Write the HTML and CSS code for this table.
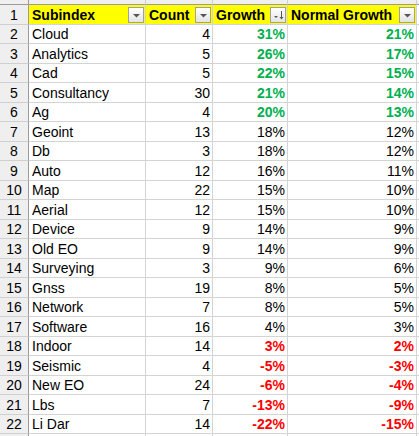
FILE: index.html
```html
<!DOCTYPE html>
<html>
<head>
<meta charset="utf-8">
<link rel="stylesheet" href="styles.css">
</head>
<body>
<div class="sheet">
  <div class="c ch corner"></div>
  <div class="c ch"><span class="lt">A</span></div>
  <div class="c ch"><span class="lt">B</span></div>
  <div class="c ch"><span class="lt">C</span></div>
  <div class="c ch"><span class="lt">D</span></div>
  <div class="c ch"><span class="lt">E</span></div>

  <div class="c rh">1</div>
  <div class="c hd"><span>Subindex</span><span class="fb"><svg width="13" height="14" viewBox="0 0 13 14"><polygon points="3,6 10,6 6.5,9.5" fill="#555"/></svg></span></div>
  <div class="c hd"><span>Count</span><span class="fb"><svg width="13" height="14" viewBox="0 0 13 14"><polygon points="3,6 10,6 6.5,9.5" fill="#555"/></svg></span></div>
  <div class="c hd"><span>Growth</span><span class="fb"><svg width="13" height="14" viewBox="0 0 13 14"><polygon points="2,8 6,8 4,10" fill="#555"/><line x1="9.5" y1="3" x2="9.5" y2="11" stroke="#555" stroke-width="1"/><polygon points="7.5,9 11.5,9 9.5,11.5" fill="#555"/></svg></span></div>
  <div class="c hd"><span>Normal Growth</span><span class="fb"><svg width="13" height="14" viewBox="0 0 13 14"><polygon points="3,6 10,6 6.5,9.5" fill="#555"/></svg></span></div>
  <div class="c"></div>

  <div class="c rh">2</div><div class="c">Cloud</div><div class="c n">4</div><div class="c n g">31%</div><div class="c n g">21%</div><div class="c"></div>
  <div class="c rh">3</div><div class="c">Analytics</div><div class="c n">5</div><div class="c n g">26%</div><div class="c n g">17%</div><div class="c"></div>
  <div class="c rh">4</div><div class="c">Cad</div><div class="c n">5</div><div class="c n g">22%</div><div class="c n g">15%</div><div class="c"></div>
  <div class="c rh">5</div><div class="c">Consultancy</div><div class="c n">30</div><div class="c n g">21%</div><div class="c n g">14%</div><div class="c"></div>
  <div class="c rh">6</div><div class="c">Ag</div><div class="c n">4</div><div class="c n g">20%</div><div class="c n g">13%</div><div class="c"></div>
  <div class="c rh">7</div><div class="c">Geoint</div><div class="c n">13</div><div class="c n">18%</div><div class="c n">12%</div><div class="c"></div>
  <div class="c rh">8</div><div class="c">Db</div><div class="c n">3</div><div class="c n">18%</div><div class="c n">12%</div><div class="c"></div>
  <div class="c rh">9</div><div class="c">Auto</div><div class="c n">12</div><div class="c n">16%</div><div class="c n">11%</div><div class="c"></div>
  <div class="c rh">10</div><div class="c">Map</div><div class="c n">22</div><div class="c n">15%</div><div class="c n">10%</div><div class="c"></div>
  <div class="c rh">11</div><div class="c">Aerial</div><div class="c n">12</div><div class="c n">15%</div><div class="c n">10%</div><div class="c"></div>
  <div class="c rh">12</div><div class="c">Device</div><div class="c n">9</div><div class="c n">14%</div><div class="c n">9%</div><div class="c"></div>
  <div class="c rh">13</div><div class="c">Old EO</div><div class="c n">9</div><div class="c n">14%</div><div class="c n">9%</div><div class="c"></div>
  <div class="c rh">14</div><div class="c">Surveying</div><div class="c n">3</div><div class="c n">9%</div><div class="c n">6%</div><div class="c"></div>
  <div class="c rh">15</div><div class="c">Gnss</div><div class="c n">19</div><div class="c n">8%</div><div class="c n">5%</div><div class="c"></div>
  <div class="c rh">16</div><div class="c">Network</div><div class="c n">7</div><div class="c n">8%</div><div class="c n">5%</div><div class="c"></div>
  <div class="c rh">17</div><div class="c">Software</div><div class="c n">16</div><div class="c n">4%</div><div class="c n">3%</div><div class="c"></div>
  <div class="c rh">18</div><div class="c">Indoor</div><div class="c n">14</div><div class="c n r">3%</div><div class="c n r">2%</div><div class="c"></div>
  <div class="c rh">19</div><div class="c">Seismic</div><div class="c n">4</div><div class="c n r">-5%</div><div class="c n r">-3%</div><div class="c"></div>
  <div class="c rh">20</div><div class="c">New EO</div><div class="c n">24</div><div class="c n r">-6%</div><div class="c n r">-4%</div><div class="c"></div>
  <div class="c rh">21</div><div class="c">Lbs</div><div class="c n">7</div><div class="c n r">-13%</div><div class="c n r">-9%</div><div class="c"></div>
  <div class="c rh">22</div><div class="c">Li Dar</div><div class="c n">14</div><div class="c n r">-22%</div><div class="c n r">-15%</div><div class="c"></div>
  <div class="c rh">23</div><div class="c"></div><div class="c"></div><div class="c"></div><div class="c"></div><div class="c"></div>
</div>
</body>
</html>
```

FILE: styles.css
```css
html, body {
  margin: 0;
  padding: 0;
  background: #ffffff;
}

.sheet {
  display: grid;
  grid-template-columns: 29px 117px 67px 75px 129px 1fr;
  grid-template-rows: 5px repeat(11, 20px 19px) 20px;
  font-family: "Liberation Sans", Arial, sans-serif;
  font-size: 14px;
  color: #000;
  overflow: hidden;
  height: 436px;
}

.c {
  box-sizing: border-box;
  border-right: 1px solid #d4d4d4;
  border-bottom: 1px solid #d4d4d4;
  display: flex;
  align-items: center;
  padding: 0 3px;
  white-space: nowrap;
  overflow: hidden;
}

.n {
  justify-content: flex-end;
  padding-right: 2px;
}

.g {
  color: #00b050;
  font-weight: bold;
}

.r {
  color: #ff0000;
  font-weight: bold;
}

.rh {
  background: #efefef;
  border-right-color: #9b9b9b;
  border-bottom-color: #d0d0d0;
  justify-content: center;
  padding: 0;
}

.ch {
  background: #efefef;
  border-bottom-color: #9b9b9b;
  border-right-color: #d0d0d0;
  align-items: flex-end;
  justify-content: center;
  padding: 0;
}

.corner {
  border-right-color: #9b9b9b;
}

.lt {
  display: block;
  height: 26px;
  line-height: 26px;
  flex: none;
}

.hd {
  background: #ffff00;
  font-weight: bold;
  justify-content: space-between;
  padding: 0 1px 0 3px;
}

.fb {
  box-sizing: border-box;
  width: 16px;
  height: 16px;
  border: 1px solid #a0a0a0;
  background: linear-gradient(#ffffff, #e4e4e4);
  display: flex;
  align-items: center;
  justify-content: center;
  flex: none;
}

.fb svg {
  display: block;
}
```
